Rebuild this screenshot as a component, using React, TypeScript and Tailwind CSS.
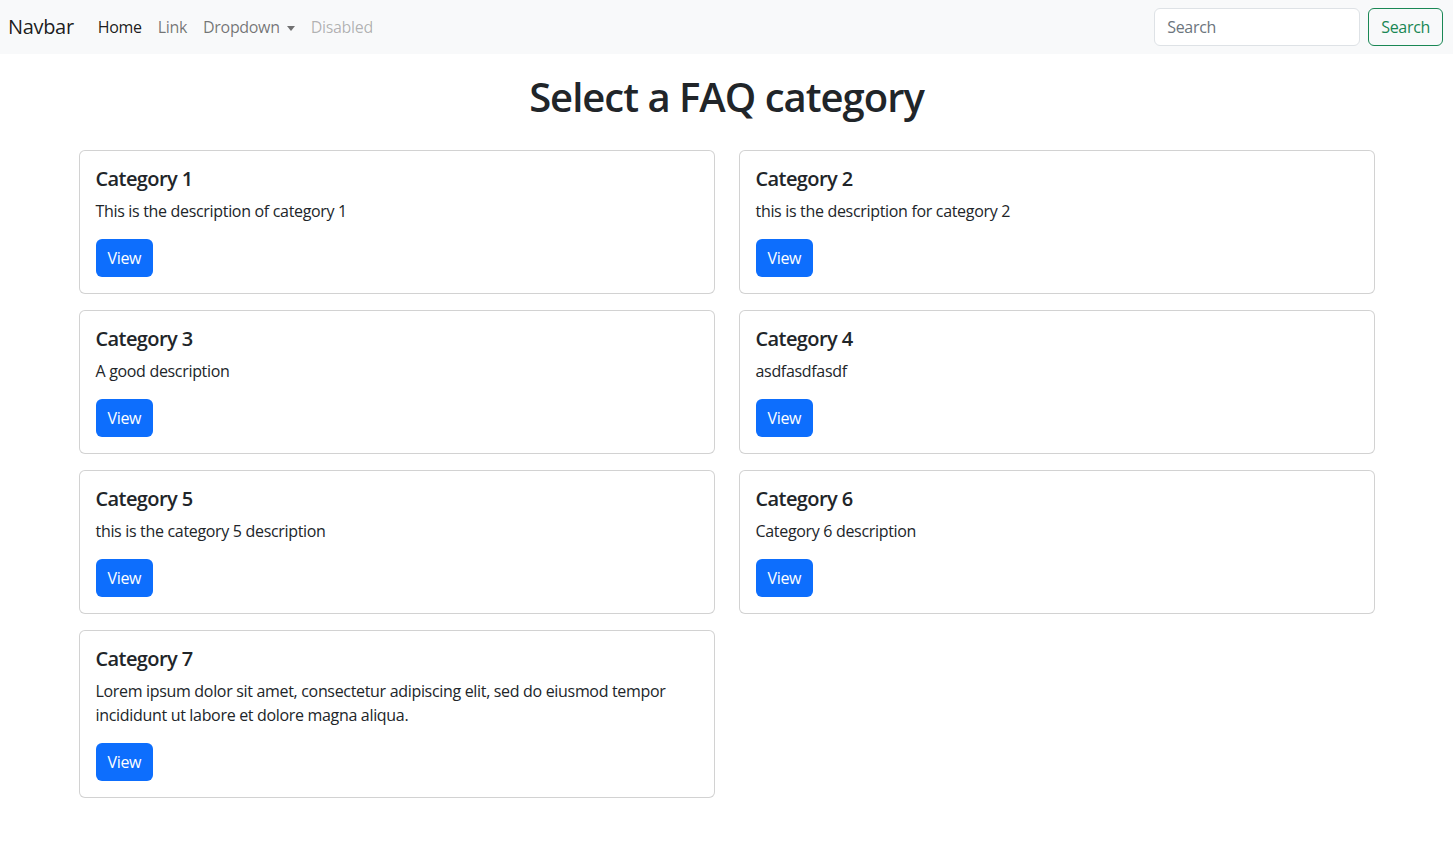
const categories = [
  { title: 'Category 1', description: 'This is the description of category 1' },
  { title: 'Category 2', description: 'this is the description for category 2' },
  { title: 'Category 3', description: 'A good description' },
  { title: 'Category 4', description: 'asdfasdfasdf' },
  { title: 'Category 5', description: 'this is the category 5 description' },
  { title: 'Category 6', description: 'Category 6 description' },
  {
    title: 'Category 7',
    description:
      'Lorem ipsum dolor sit amet, consectetur adipiscing elit, sed do eiusmod tempor incididunt ut labore et dolore magna aliqua.',
  },
];

function Navbar() {
  return (
    <nav className="flex h-[54px] items-center justify-between bg-[#f8f9fa] pl-2 pr-[10px]">
      <div className="flex items-center">
        <a className="mr-4 text-[20px] leading-[30px] text-black/90">Navbar</a>
        <ul className="flex items-center text-[16px] leading-6">
          <li className="px-2 text-black/90">Home</li>
          <li className="px-2 text-black/55">Link</li>
          <li className="flex items-center px-2 text-black/55">
            Dropdown
            <span className="ml-[7px] mt-[2px] h-0 w-0 border-x-[4px] border-t-[5px] border-x-transparent border-t-black/55" />
          </li>
          <li className="px-2 text-black/30">Disabled</li>
        </ul>
      </div>
      <form className="flex items-center gap-2" onSubmit={e => e.preventDefault()}>
        <input
          type="search"
          placeholder="Search"
          aria-label="Search"
          className="h-[38px] w-[206px] rounded-md border border-[#dee2e6] bg-white px-3 text-[16px] text-[#212529] placeholder:text-[#6c757d] outline-none"
        />
        <button
          type="submit"
          className="h-[38px] rounded-md border border-[#198754] px-3 text-[16px] text-[#198754]"
        >
          Search
        </button>
      </form>
    </nav>
  );
}

function CategoryCard({ title, description }: { title: string; description: string }) {
  return (
    <div className="rounded-md border border-black/[0.175] bg-white p-4">
      <h5 className="mb-2 text-[20px] font-semibold leading-6 tracking-[-0.03em] text-[#212529]">{title}</h5>
      <p className="mb-4 text-[16px] leading-6 text-[#212529]">{description}</p>
      <button className="h-[38px] rounded-md bg-[#0d6efd] px-3 text-[16px] text-white">View</button>
    </div>
  );
}

export default function App() {
  return (
    <div className="min-h-screen bg-white font-['Open_Sans',sans-serif] tracking-[-0.02em] text-[#212529]">
      <Navbar />
      <main className="mx-auto max-w-[1320px] px-3">
        <h1 className="mb-[29px] mt-[19px] text-center text-[40px] font-semibold leading-[48px] tracking-[-0.025em]">
          Select a FAQ category
        </h1>
        <div className="grid grid-cols-2 gap-x-6 gap-y-4">
          {categories.map(c => (
            <CategoryCard key={c.title} title={c.title} description={c.description} />
          ))}
        </div>
      </main>
    </div>
  );
}
